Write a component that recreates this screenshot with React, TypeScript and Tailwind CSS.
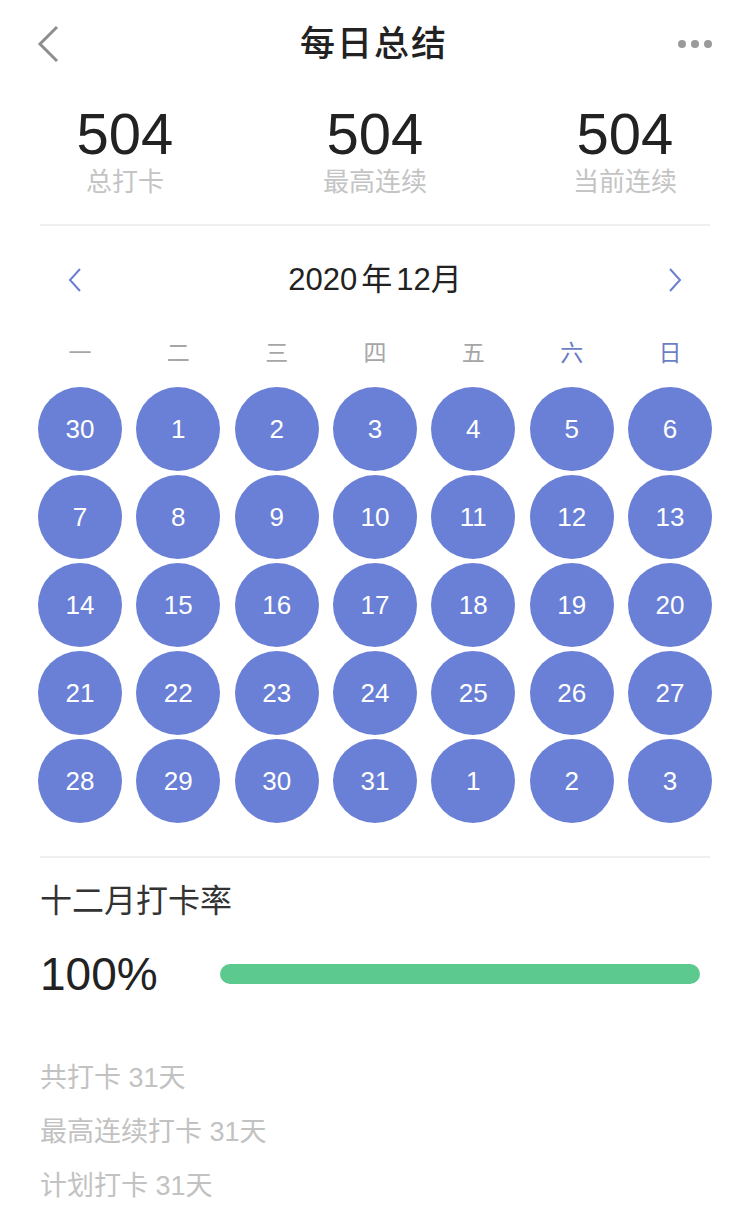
import React from 'react';

const weekdays = ['一', '二', '三', '四', '五', '六', '日'];

const days = [30, ...Array.from({ length: 31 }, (_, i) => i + 1), 1, 2, 3];

const stats = [
  { value: 504, label: '总打卡' },
  { value: 504, label: '最高连续' },
  { value: 504, label: '当前连续' },
];

const footer = ['共打卡 31天', '最高连续打卡 31天', '计划打卡 31天'];

const font = { fontFamily: '"Liberation Sans", "Noto Sans CJK SC", sans-serif' };

export default function App() {
  return (
    <div className="min-h-[1223px] w-[750px] bg-white" style={font}>
      {/* header */}
      <div className="flex h-[88px] items-center justify-between px-[36px]">
        <svg width="24" height="38" viewBox="0 0 24 38" className="text-[#8e8e8e]">
          <path d="M21 2 L4 19 L21 36" fill="none" stroke="currentColor" strokeWidth="3" />
        </svg>
        <div className="pl-[10px] text-[35px] font-medium tracking-[2px] text-[#222]">每日总结</div>
        <div className="flex w-[36px] items-center justify-between pr-[2px]">
          <span className="h-[8px] w-[8px] rounded-full bg-[#9a9a9a]" />
          <span className="h-[8px] w-[8px] rounded-full bg-[#9a9a9a]" />
          <span className="h-[8px] w-[8px] rounded-full bg-[#9a9a9a]" />
        </div>
      </div>

      {/* stats */}
      <div className="grid grid-cols-3 pt-[15px]">
        {stats.map((s) => (
          <div key={s.label} className="flex flex-col items-center">
            <div className="text-[58px] leading-[62px] text-[#222]">{s.value}</div>
            <div className="text-[26px] leading-[34px] text-[#c4c4c4]">{s.label}</div>
          </div>
        ))}
      </div>

      <div className="mx-[40px] mt-[25px] h-[2px] bg-[#efefef]" />

      {/* month nav */}
      <div className="flex h-[108px] items-center justify-between px-[68px]">
        <svg width="14" height="24" viewBox="0 0 14 24" className="text-[#6b7fd0]">
          <path d="M12 1 L2 12 L12 23" fill="none" stroke="currentColor" strokeWidth="2" />
        </svg>
        <div className="flex items-center gap-[4px] text-[31px] text-[#222]">
          <span>2020</span>
          <span>年</span>
          <span>12月</span>
        </div>
        <svg width="14" height="24" viewBox="0 0 14 24" className="text-[#6b7fd0]">
          <path d="M2 1 L12 12 L2 23" fill="none" stroke="currentColor" strokeWidth="2" />
        </svg>
      </div>

      {/* calendar */}
      <div className="px-[38px]">
        <div className="mt-[1px] flex h-[36px] items-center justify-between">
          {weekdays.map((w, i) => (
            <div
              key={w}
              className={
                i >= 5
                  ? 'w-[84px] text-center text-[23px] text-[#6b7fc4]'
                  : 'w-[84px] text-center text-[23px] text-[#a6a6a6]'
              }
            >
              {w}
            </div>
          ))}
        </div>
        <div
          className="mt-[16px] grid justify-between gap-y-[4px]"
          style={{ gridTemplateColumns: 'repeat(7, 84px)' }}
        >
          {days.map((d, i) => (
            <div
              key={i}
              className="flex h-[84px] w-[84px] items-center justify-center rounded-full bg-[#6a7fd6] text-[26px] text-white"
            >
              {d}
            </div>
          ))}
        </div>
      </div>

      <div className="mx-[40px] mt-[33px] h-[2px] bg-[#efefef]" />

      {/* rate */}
      <div className="px-[40px]">
        <div className="mt-[23px] text-[32px] leading-[40px] text-[#333]">十二月打卡率</div>
        <div className="mt-[27px] flex items-center">
          <div className="w-[180px] text-[46px] leading-[52px] text-[#222]">100%</div>
          <div className="mr-[10px] h-[20px] flex-1 rounded-full bg-[#5cc98f]" />
        </div>
        <div className="mt-[61px] flex flex-col gap-[20px]">
          {footer.map((t) => (
            <div key={t} className="text-[27px] leading-[34px] text-[#c2c2c2]">
              {t}
            </div>
          ))}
        </div>
      </div>
    </div>
  );
}
